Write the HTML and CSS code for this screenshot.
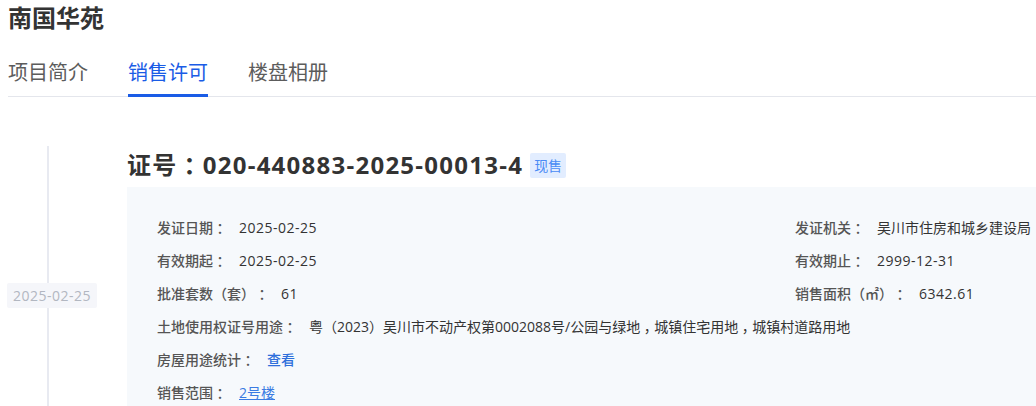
FILE: index.html
```html
<!DOCTYPE html>
<html lang="zh-CN">
<head>
<meta charset="utf-8">
<title>南国华苑</title>
<link rel="stylesheet" href="styles.css">
</head>
<body>
<div class="page">
  <h1 class="title">南国华苑</h1>
  <nav class="tabs">
    <a class="tab">项目简介</a>
    <a class="tab active">销售许可</a>
    <a class="tab">楼盘相册</a>
  </nav>
  <section class="timeline-item">
    <div class="time-col">
      <span class="date-tag">2025-02-25</span>
    </div>
    <div class="content">
      <div class="heading">
        <h2 class="cert">证号<span class="p">：</span>020-440883-2025-00013-4</h2>
        <span class="status">现售</span>
      </div>
      <div class="info">
        <div class="field"><span class="label">发证日期<span class="p">：</span></span><span class="value num">2025-02-25</span></div>
        <div class="field"><span class="label">发证机关<span class="p">：</span></span><span class="value">吴川市住房和城乡建设局</span></div>
        <div class="field"><span class="label">有效期起<span class="p">：</span></span><span class="value num">2025-02-25</span></div>
        <div class="field"><span class="label">有效期止<span class="p">：</span></span><span class="value num">2999-12-31</span></div>
        <div class="field"><span class="label">批准套数（套）<span class="p">：</span></span><span class="value num">61</span></div>
        <div class="field"><span class="label">销售面积（㎡）<span class="p">：</span></span><span class="value num">6342.61</span></div>
        <div class="field wide"><span class="label">土地使用权证号用途<span class="p">：</span></span><span class="value">粤（2023）吴川市不动产权第0002088号/公园与绿地<span class="p">，</span>城镇住宅用地<span class="p">，</span>城镇村道路用地</span></div>
        <div class="field wide"><span class="label">房屋用途统计<span class="p">：</span></span><a class="value link">查看</a></div>
        <div class="field wide"><span class="label">销售范围<span class="p">：</span></span><a class="value link underline">2号楼</a></div>
      </div>
    </div>
  </section>
</div>
</body>
</html>
```
FILE: styles.css
```css
html, body {
  margin: 0;
  padding: 0;
  background: #fff;
  overflow: hidden;
}
body {
  font-family: "Open Sans", "Noto Sans CJK SC", sans-serif;
  color: #333;
  text-spacing-trim: space-all;
}
.p {
  font-family: "Noto Sans CJK SC", sans-serif;
  font-feature-settings: "halt" 1;
  padding: 0 0.25em;
  line-height: 1;
  white-space: nowrap;
}
.page {
  padding-left: 8px;
}
.title {
  margin: 0;
  font-size: 24px;
  line-height: 36px;
  font-weight: 700;
  color: #333;
}
.tabs {
  display: flex;
  gap: 40px;
  border-bottom: 1px solid #e4e6ec;
}
.tab {
  position: relative;
  padding: 23px 0 9px;
  font-size: 20px;
  line-height: 28px;
  color: #5c5c5c;
}
.tab.active {
  color: #1a5ce6;
}
.tab.active::after {
  content: "";
  position: absolute;
  left: 0;
  right: 0;
  bottom: -1px;
  height: 3px;
  background: #1a5ce6;
}
.timeline-item {
  display: flex;
  margin-top: 49px;
}
.time-col {
  position: relative;
  width: 119px;
  flex: none;
  padding-top: 137px;
}
.time-col::before {
  content: "";
  position: absolute;
  left: 39px;
  top: 0;
  bottom: -200px;
  width: 2px;
  background: #e8eaf1;
}
.date-tag {
  position: relative;
  display: inline-block;
  margin-left: -1px;
  padding: 0 6px;
  height: 25px;
  line-height: 25px;
  font-size: 14px;
  letter-spacing: 0.5px;
  color: #b2b7c1;
  background: #f5f6fa;
  border-radius: 2px;
}
.content {
  flex: 1;
  min-width: 0;
}
.heading {
  display: flex;
  align-items: center;
  height: 38px;
}
.cert {
  margin: 0;
  font-size: 24px;
  line-height: 38px;
  font-weight: 700;
  letter-spacing: 1.25px;
  color: #333;
  white-space: nowrap;
}
.status {
  margin-left: 7px;
  padding: 0 4px;
  height: 25px;
  line-height: 25px;
  font-size: 14px;
  color: #4a8bf5;
  background: #e2edff;
  border-radius: 2px;
}
.info {
  margin-top: 3px;
  background: #f6f9fc;
  padding: 31px 0 40px 30px;
  display: grid;
  grid-template-columns: 638px 1fr;
  grid-auto-rows: 20px;
  row-gap: 13px;
}
.field {
  display: flex;
  align-items: center;
  height: 20px;
  font-size: 14px;
  line-height: 20px;
  white-space: nowrap;
}
.field.wide {
  grid-column: 1 / -1;
}
.label {
  color: #555;
  font-weight: 500;
}
.value {
  margin-left: 12px;
  color: #333;
}
.num {
  letter-spacing: 0.5px;
}
.link {
  color: #2e6fdb;
  font-weight: 500;
}
.link.underline {
  font-weight: 400;
  color: #3a7be2;
  text-decoration: underline;
}
```
